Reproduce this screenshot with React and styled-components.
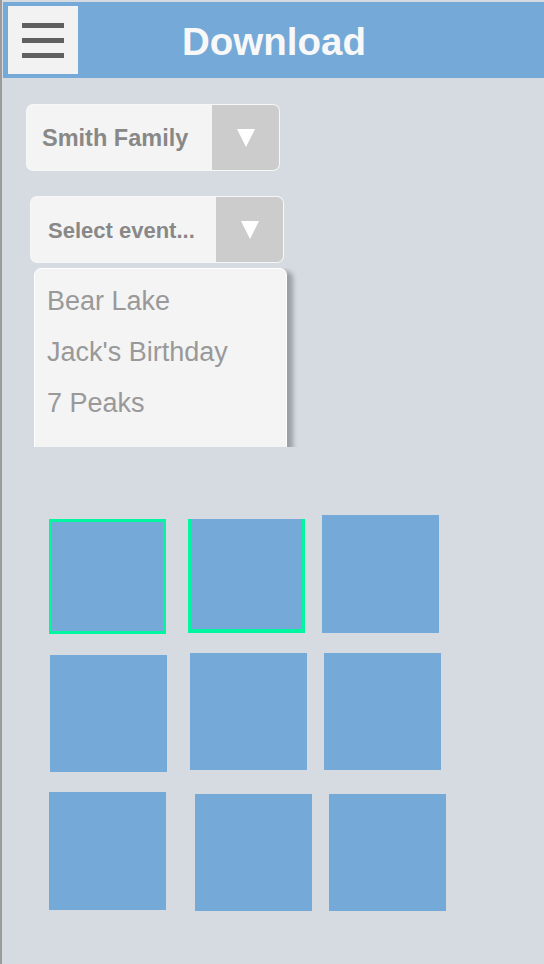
import React from 'react'
import styled, { createGlobalStyle } from 'styled-components'

const GlobalStyle = createGlobalStyle`
    html, body {
        margin: 0;
        padding: 0;
        background: #d6dbe2;
        font-family: "Liberation Sans", Arial, Helvetica, sans-serif;
    }
`

const Page = styled.div`
    min-height: 964px;
    box-sizing: border-box;
    border-left: 2px solid #9b9b9b;
    padding: 2px 0 0 1px;
    background: #d6dbe2;
`

const Header = styled.header`
    height: 76px;
    background: #74a9d8;
    display: flex;
    align-items: center;
`

const MenuButton = styled.button`
    width: 70px;
    height: 68px;
    margin-left: 5px;
    border: none;
    padding: 0;
    background: #f2f2f2;
    display: flex;
    flex-direction: column;
    align-items: center;
    justify-content: center;
    gap: 10px;

    span {
        display: block;
        width: 42px;
        height: 5px;
        background: #5f5f5f;
    }
`

const Title = styled.h1`
    margin: 4px 0 0 104px;
    color: #f8f8f8;
    font-size: 38.5px;
    font-weight: bold;
`

const Content = styled.div`
    display: flex;
    flex-direction: column;
    align-items: flex-start;
`

const Select = styled.div`
    width: 254px;
    height: 67px;
    box-sizing: border-box;
    margin: ${p => p.$top}px 0 0 ${p => p.$left}px;
    display: flex;
    border-radius: 7px;
    overflow: hidden;
    border: 1px solid rgba(255, 255, 255, 0.3);
    background: #f4f4f4;
`

const SelectLabel = styled.div`
    flex: 1;
    display: flex;
    align-items: center;
    padding: 2px 0 0 ${p => p.$pad}px;
    color: #888888;
    font-weight: bold;
    font-size: ${p => p.$size}px;
    white-space: nowrap;
`

const ArrowBox = styled.div`
    width: 67px;
    background: #cccccc;
    display: flex;
    align-items: center;
    justify-content: center;

    &::after {
        content: '';
        width: 0;
        height: 0;
        border-left: 9px solid transparent;
        border-right: 9px solid transparent;
        border-top: 18px solid #ffffff;
    }
`

const ListClip = styled.div`
    width: 290px;
    height: 179px;
    margin: 5px 0 0 31px;
    overflow: hidden;
`

const EventList = styled.ul`
    list-style: none;
    margin: 0;
    width: 253px;
    height: 230px;
    box-sizing: border-box;
    padding: 7px 0 0 12px;
    background: #f4f4f4;
    border: 1px solid #ffffff;
    border-radius: 7px 7px 0 0;
    box-shadow: 6px 3px 5px rgba(0, 0, 0, 0.28);
`

const EventItem = styled.li`
    height: 51px;
    line-height: 51px;
    font-size: 27px;
    color: #999999;
`

const Gallery = styled.div`
    margin-top: 68px;
    display: flex;
    flex-direction: column;
`

const Row = styled.div`
    display: flex;
    align-items: flex-start;
    margin-top: ${p => p.$gap || 0}px;
`

const Tile = styled.div`
    box-sizing: border-box;
    width: 117px;
    height: ${p => p.$h || 117}px;
    margin: ${p => p.$dy || 0}px 0 0 ${p => p.$dx}px;
    background: #74a9d8;
    border-style: solid;
    border-color: #00f7a0;
    border-width: ${p => p.$ring || '0'};
`

const rows = [
    { gap: 0, tiles: [
        { dx: 46, dy: 4, h: 115, ring: '3px' },
        { dx: 22, dy: 4, h: 114, ring: '0 3px 4px 3px' },
        { dx: 17, dy: 0, h: 118 },
    ] },
    { gap: 19, tiles: [
        { dx: 47, dy: 2, h: 117 },
        { dx: 23, dy: 0, h: 117 },
        { dx: 17, dy: 0, h: 117 },
    ] },
    { gap: 20, tiles: [
        { dx: 46, dy: 0, h: 118 },
        { dx: 29, dy: 2, h: 117 },
        { dx: 17, dy: 2, h: 117 },
    ] },
]

const events = ['Bear Lake', "Jack's Birthday", '7 Peaks']

export default function App() {
    return (
        <Page>
            <GlobalStyle />
            <Header>
                <MenuButton aria-label="menu">
                    <span />
                    <span />
                    <span />
                </MenuButton>
                <Title>Download</Title>
            </Header>

            <Content>
                <Select $top={26} $left={23}>
                    <SelectLabel $pad={15} $size={23.5}>Smith Family</SelectLabel>
                    <ArrowBox />
                </Select>

                <Select $top={25} $left={27}>
                    <SelectLabel $pad={17} $size={22}>Select event...</SelectLabel>
                    <ArrowBox />
                </Select>

                <ListClip>
                    <EventList>
                        {events.map(e => (
                            <EventItem key={e}>{e}</EventItem>
                        ))}
                    </EventList>
                </ListClip>

                <Gallery>
                    {rows.map((row, i) => (
                        <Row key={i} $gap={row.gap}>
                            {row.tiles.map((t, j) => (
                                <Tile key={j} $dx={t.dx} $dy={t.dy} $h={t.h} $ring={t.ring} />
                            ))}
                        </Row>
                    ))}
                </Gallery>
            </Content>
        </Page>
    )
}
